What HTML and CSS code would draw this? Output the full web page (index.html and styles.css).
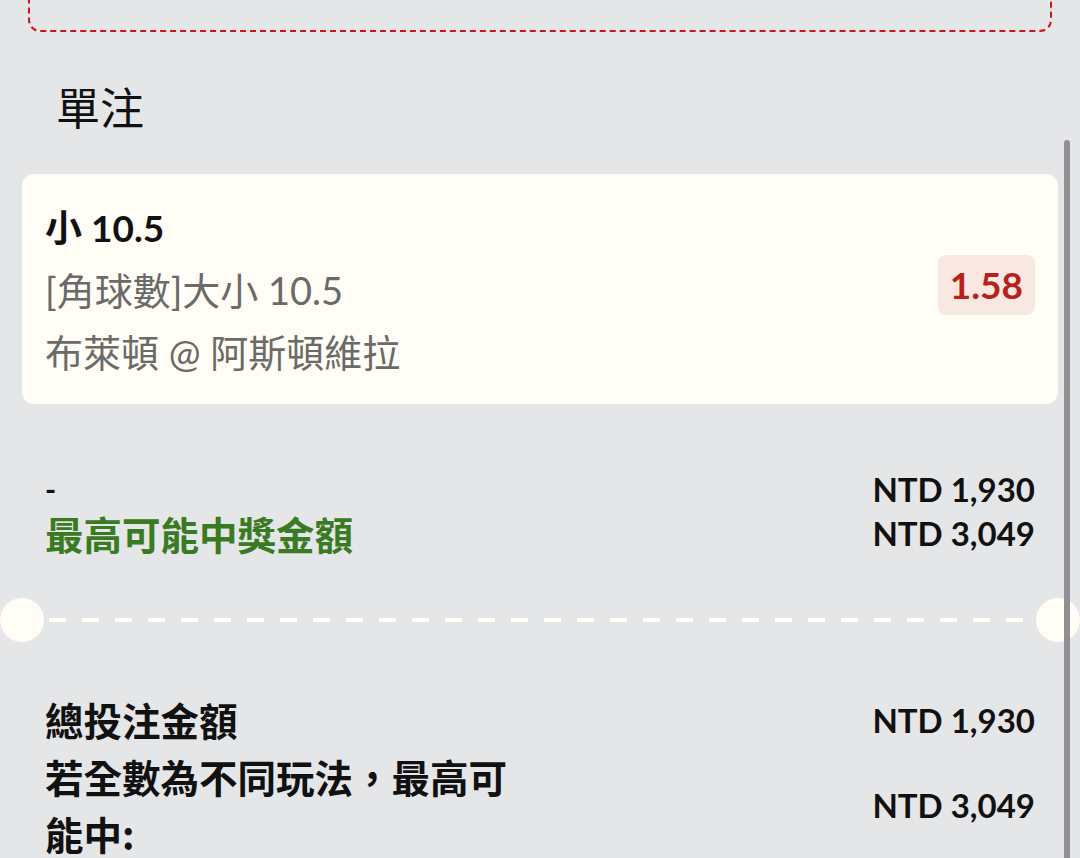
FILE: index.html
```html
<!DOCTYPE html>
<html lang="zh-Hant">
<head>
<meta charset="utf-8">
<link rel="stylesheet" href="styles.css">
</head>
<body>
<div class="page">
  <div class="promo-box"></div>
  <h2 class="section-title">單注</h2>

  <div class="bet-card">
    <div class="bet-info">
      <div class="bet-pick">小 10.5</div>
      <div class="bet-market">[角球數]大小 10.5</div>
      <div class="bet-match">布萊頓 @ 阿斯頓維拉</div>
    </div>
    <div class="odds">1.58</div>
  </div>

  <div class="stake-block">
    <div class="row">
      <div class="label dash">-</div>
      <div class="amount">NTD 1,930</div>
    </div>
    <div class="row">
      <div class="label green">最高可能中獎金額</div>
      <div class="amount">NTD 3,049</div>
    </div>
  </div>

  <div class="ticket-sep">
    <span class="notch"></span>
    <span class="dashes"></span>
    <span class="notch"></span>
  </div>

  <div class="total-block">
    <div class="row big">
      <div class="label">總投注金額</div>
      <div class="amount">NTD 1,930</div>
    </div>
    <div class="row big">
      <div class="label wrap">若全數為不同玩法，最高可能中:</div>
      <div class="amount">NTD 3,049</div>
    </div>
  </div>

  <div class="scrollbar"></div>
</div>
</body>
</html>
```

FILE: styles.css
```css
html, body {
  margin: 0;
  padding: 0;
  background: #e5e6e8;
}
body {
  font-family: "Lato", "Noto Sans CJK TC", sans-serif;
  color: #111;
  width: 1080px;
  height: 858px;
  overflow: hidden;
}
.page {
  position: relative;
  display: flow-root;
  height: 858px;
}
.promo-box {
  height: 80px;
  margin: -52px 28px 0 28px;
  border: 2px dashed #c8161d;
  border-radius: 12px;
}
.section-title {
  margin: 44px 0 0 0;
  padding-left: 56px;
  font-family: "Noto Sans CJK TC", sans-serif;
  font-weight: 400;
  font-size: 44px;
  line-height: 60px;
  color: #111;
}
.bet-card {
  margin: 38px 22px 0 22px;
  background: #fffdf5;
  border-radius: 12px;
  padding: 23px 23px 21px 23px;
  display: flex;
  align-items: center;
  justify-content: space-between;
}
.bet-info {
  display: flex;
  flex-direction: column;
}
.bet-pick {
  font-size: 37px;
  line-height: 62px;
  font-weight: 700;
  color: #111;
}
.bet-market, .bet-match {
  font-size: 38px;
  line-height: 62px;
  font-weight: 400;
  color: #6a6a68;
}
.odds {
  background: #f8e8e1;
  color: #b3221c;
  font-weight: 700;
  font-size: 37px;
  line-height: 60px;
  padding: 0 12px;
  margin-bottom: 10px;
  border-radius: 8px;
}
.stake-block {
  margin-top: 63px;
  padding: 0 45px;
}
.row {
  display: flex;
  align-items: center;
  justify-content: space-between;
}
.stake-block .row {
  height: 44px;
}
.label {
  font-family: "Noto Sans CJK TC", sans-serif;
  font-size: 38.5px;
  font-weight: 700;
  line-height: 44px;
}
.label.dash {
  font-family: "Lato", sans-serif;
  font-size: 30px;
}
.label.green {
  color: #3a7a22;
}
.amount {
  font-size: 33px;
  font-weight: 700;
  color: #111;
  white-space: nowrap;
}
.ticket-sep {
  margin-top: 43px;
  height: 44px;
  display: flex;
  align-items: center;
}
.notch {
  width: 44px;
  height: 44px;
  border-radius: 50%;
  background: #fffdf5;
  flex: none;
}
.dashes {
  flex: 1;
  height: 4px;
  margin: 0 5px;
  background: repeating-linear-gradient(90deg, #fffdf5 0, #fffdf5 17px, transparent 17px, transparent 33px);
}
.total-block {
  margin-top: 49px;
  padding: 0 45px;
}
.row.big .label {
  line-height: 57px;
}
.label.wrap {
  width: 480px;
}
.scrollbar {
  position: absolute;
  left: 1064px;
  top: 140px;
  width: 6px;
  height: 760px;
  border-radius: 3px;
  background: #8f8f94;
}
```
